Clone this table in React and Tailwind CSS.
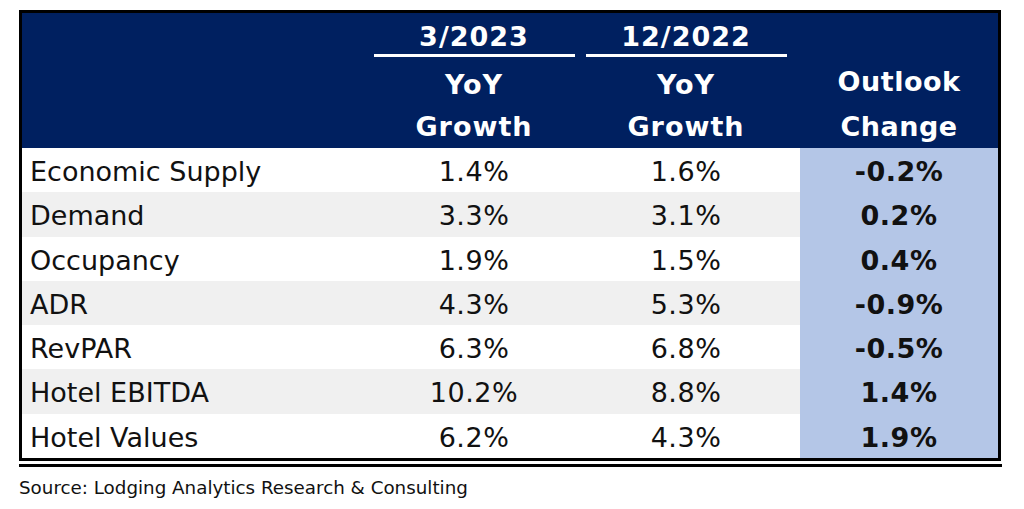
const rows = [
  { label: "Economic Supply", a: "1.4%", b: "1.6%", c: "-0.2%" },
  { label: "Demand", a: "3.3%", b: "3.1%", c: "0.2%" },
  { label: "Occupancy", a: "1.9%", b: "1.5%", c: "0.4%" },
  { label: "ADR", a: "4.3%", b: "5.3%", c: "-0.9%" },
  { label: "RevPAR", a: "6.3%", b: "6.8%", c: "-0.5%" },
  { label: "Hotel EBITDA", a: "10.2%", b: "8.8%", c: "1.4%" },
  { label: "Hotel Values", a: "6.2%", b: "4.3%", c: "1.9%" },
];

const grid = "grid grid-cols-[346px_212px_220px_198px]";

const PeriodHead = ({ period, extra }) => (
  <div className={`flex flex-col items-center pt-[8px] ${extra}`}>
    <div className="h-[32px] leading-[32px] tracking-[1px]">{period}</div>
    <div className="mt-[1px] h-[3px] w-[201px] bg-white" />
    <div className="flex h-[56px] items-center tracking-[1px]">YoY</div>
    <div className="flex h-[28px] items-center tracking-[1px]">Growth</div>
  </div>
);

const App = () => {
  return (
    <div
      className="h-[509px] w-[1024px] bg-white text-[#111]"
      style={{ fontFamily: '"DejaVu Sans", "Liberation Sans", sans-serif' }}
    >
      <div className="pt-[10px] pl-[19px]">
        <div className="w-[982px] border-[3px] border-black">
          {/* header */}
          <div className={`${grid} h-[135px] bg-[#002060] text-[27px] font-bold text-white`}>
            <div />
            <PeriodHead period="3/2023" extra="" />
            <PeriodHead period="12/2022" extra="pr-[8px]" />
            <div className="flex flex-col items-center pt-[49px]">
              <div className="h-[40px] leading-[40px] tracking-[0.5px]">Outlook</div>
              <div className="mt-[11px] flex h-[28px] items-center tracking-[0.5px]">Change</div>
            </div>
          </div>

          {/* body */}
          {rows.map((r, i) => (
            <div
              key={r.label}
              className={`${grid} h-[44.3px] ${i % 2 === 1 ? "bg-[#f0f0f0]" : "bg-white"} text-[27px]`}
            >
              <div className="flex items-center pt-[4px] pl-[8px]">{r.label}</div>
              <div className="flex items-center justify-center pt-[4px] tracking-[0.5px]">{r.a}</div>
              <div className="flex items-center justify-center pt-[4px] pr-[8px] tracking-[0.5px]">
                {r.b}
              </div>
              <div className="flex items-center justify-center bg-[#b4c6e7] pt-[4px] font-bold tracking-[0.5px]">
                {r.c}
              </div>
            </div>
          ))}
        </div>
        <div className="mt-[3px] h-[3px] w-[983px] bg-black" />
        <div className="mt-[9px] text-[18.3px] leading-[24px]">
          Source: Lodging Analytics Research &amp; Consulting
        </div>
      </div>
    </div>
  );
};

export default App;
